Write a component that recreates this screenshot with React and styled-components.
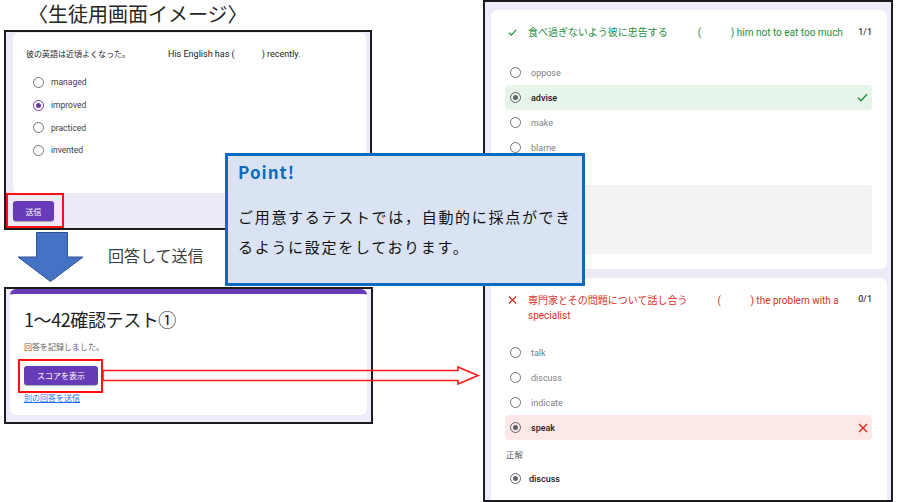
import React from 'react';
import styled, { createGlobalStyle } from 'styled-components';

const FORM_FONT = `Roboto, "Noto Sans CJK JP", sans-serif`;
const JP_FONT = `"Noto Sans CJK JP", "Noto Sans", sans-serif`;

const GlobalStyle = createGlobalStyle`
    html, body { margin: 0; padding: 0; background: #fff; }
    * { box-sizing: border-box; }
`;

let Slide = styled.div`
    position: relative;
    width: 900px;
    height: 502px;
    display: flex;
    align-items: flex-start;
    background: #fff;
    overflow: hidden;
`;

let LeftCol = styled.div`
    width: 369px;
    margin-left: 4px;
    display: flex;
    flex-direction: column;
`;

let Title = styled.div`
    height: 30px;
    padding-left: 24px;
    font-family: ${JP_FONT};
    font-size: 20px;
    line-height: 28px;
    color: #262626;
    white-space: nowrap;
`;

let Frame = styled.div`
    width: ${p => p.$w}px;
    height: ${p => p.$h}px;
    border: 2px solid #1c1c1c;
    background: #efeaf7;
    display: flex;
    flex-direction: column;
    overflow: hidden;
    font-family: ${FORM_FONT};
`;

let QuestionCard = styled.div`
    margin: 1px 4px 0 7px;
    height: 160px;
    background: #fff;
    border-radius: 5px;
    padding: 15px 0 0 13px;
`;

let Question = styled.div`
    font-size: 9px;
    line-height: 12px;
    color: #202124;
    white-space: nowrap;

    .jp
    {
        display: inline-block;
        width: 142px;
        font-size: 8px;
    }

    .blank
    {
        display: inline-block;
        width: 27px;
    }
`;

let OptionList = styled.div`
    margin-top: ${p => p.$top || 0}px;
    display: flex;
    flex-direction: column;
`;

let SmallOption = styled.div`
    height: 22.7px;
    display: flex;
    align-items: center;
    font-size: 8.5px;
    color: #3c4043;

    span { margin-left: 7px; }
`;

let Radio = styled.span`
    flex: none;
    width: 11px;
    height: 11px;
    border-radius: 50%;
    border: 1.4px solid ${p => p.$checked ? p.$color : '#6f7378'};
    display: flex;
    align-items: center;
    justify-content: center;

    &::after
    {
        content: "";
        width: 5px;
        height: 5px;
        border-radius: 50%;
        background: ${p => p.$color};
        display: ${p => p.$checked ? 'block' : 'none'};
    }
`;

let Highlight = styled.div`
    border: 2px solid #ff1010;
    padding: ${p => p.$pad};
    width: ${p => p.$w}px;
    height: ${p => p.$h}px;
    margin-left: ${p => p.$ml || 0}px;
    margin-top: ${p => p.$mt || 0}px;
`;

let PurpleButton = styled.div`
    width: ${p => p.$w}px;
    height: ${p => p.$h}px;
    background: #673ab7;
    color: #fff;
    border-radius: 3px;
    font-family: ${JP_FONT};
    font-size: 8px;
    display: flex;
    align-items: center;
    justify-content: center;
    box-shadow: 0 1px 1px rgba(0,0,0,0.3);
`;

let ArrowRow = styled.div`
    height: 57px;
    display: flex;
    align-items: flex-start;
    padding-left: 13px;
`;

let ArrowNote = styled.div`
    margin: 15px 0 0 24px;
    font-family: ${JP_FONT};
    font-size: 16px;
    line-height: 20px;
    color: #3f3f3f;
`;

let ResultCard = styled.div`
    margin: 0 4px 7px 4px;
    height: 126px;
    background: #fff;
    border-top: 5px solid #673ab7;
    border-radius: 6px;
    padding: 13px 0 0 14px;

    h1
    {
        margin: 0;
        font-family: ${JP_FONT};
        font-weight: 400;
        font-size: 18px;
        line-height: 24px;
        letter-spacing: -0.4px;
        color: #202124;
    }

    p
    {
        margin: 10px 0 0 0;
        font-family: ${JP_FONT};
        font-size: 8px;
        line-height: 12px;
        color: #5f6368;
    }

    a
    {
        display: block;
        font-family: ${JP_FONT};
        font-size: 8px;
        line-height: 10px;
        color: #1a73e8;
        text-decoration: underline;
    }
`;

let RightFrame = styled(Frame)`
    margin-left: 110px;
    padding: 8px 4px 0 6px;
`;

let QuizCard = styled.div`
    flex: none;
    background: #fff;
    border-radius: 6px;
    padding: ${p => p.$pt || 15}px 15px 15px 14px;
    margin-bottom: 9px;
`;

let QuizHeader = styled.div`
    display: flex;
    align-items: flex-start;
    font-size: 10px;
    line-height: ${p => p.$lh}px;
    color: ${p => p.$color};

    .icon
    {
        flex: none;
        width: 9px;
        margin: 0 11px 0 3px;
        display: flex;
        align-items: center;
        height: ${p => p.$lh}px;
    }

    .text
    {
        flex: 1;
        padding-right: 10px;
    }

    .jp { font-family: ${JP_FONT}; margin-right: 30px; }

    .paren
    {
        display: inline-block;
        width: 33px;
    }

    .score
    {
        flex: none;
        font-size: 9px;
        font-weight: 500;
        color: #3c4043;
    }
`;

let QuizOption = styled.div`
    height: 25px;
    display: flex;
    align-items: center;
    padding: 0 4px 0 5px;
    border-radius: 4px;
    background: ${p => p.$bg || 'transparent'};
    font-size: 9px;
    color: ${p => p.$strong ? '#202124' : '#7b7f84'};
    font-weight: ${p => p.$strong ? 500 : 400};

    .label { margin-left: ${p => p.$gap || 10}px; flex: 1; }
`;

let FeedbackBox = styled.div`
    margin-top: 25px;
    height: 69px;
    background: #f3f3f4;
    border-radius: 2px;
`;

let CorrectLabel = styled.div`
    margin: 8px 0 0 1px;
    font-family: ${JP_FONT};
    font-size: 8.5px;
    line-height: 12px;
    color: #5f6368;
`;

let PointBox = styled.div`
    position: absolute;
    left: 225px;
    top: 153px;
    width: 360px;
    height: 133px;
    border: 3px solid #0a6cc0;
    background: #dae3f3;
    padding: 5px 0 0 10px;
    font-family: ${JP_FONT};

    h2
    {
        margin: 0;
        font-size: 17px;
        line-height: 22px;
        font-weight: 700;
        letter-spacing: 1px;
        color: #0a6cc0;
    }

    p
    {
        margin: 19px 0 0 0;
        font-size: 15px;
        line-height: 30px;
        letter-spacing: 1.7px;
        color: #111;
        white-space: nowrap;
    }
`;

let Overlay = styled.svg`
    position: absolute;
    left: 0;
    top: 0;
    pointer-events: none;
`;

const Check = ({ color = '#1e8e3e' }) => (
    <svg width="11" height="9" viewBox="0 0 11 9">
        <polyline points="1,4.8 4,7.8 10,1.2" fill="none" stroke={color} strokeWidth="1.4" />
    </svg>
);

const Cross = ({ color = '#d93025' }) => (
    <svg width="10" height="10" viewBox="0 0 10 10">
        <path d="M1 1 L9 9 M9 1 L1 9" stroke={color} strokeWidth="1.5" />
    </svg>
);

function App()
{
    let leftOptions = ["managed", "improved", "practiced", "invented"];

    return (
        <Slide>
            <GlobalStyle />
            <LeftCol>
                <Title>〈生徒用画面イメージ〉</Title>
                <Frame $w={368} $h={200}>
                    <QuestionCard>
                        <Question>
                            <span className="jp">彼の英語は近頃よくなった。</span>
                            His English has (<span className="blank" />) recently.
                        </Question>
                        <OptionList $top={10}>
                            {leftOptions.map(o => (
                                <SmallOption key={o}>
                                    <Radio $checked={o === "improved"} $color="#673ab7" />
                                    <span>{o}</span>
                                </SmallOption>
                            ))}
                        </OptionList>
                    </QuestionCard>
                    <Highlight $w={58} $h={35} $pad="6px 0 0 5px">
                        <PurpleButton $w={41} $h={20}>送信</PurpleButton>
                    </Highlight>
                </Frame>
                <ArrowRow>
                    <svg width="67" height="52" viewBox="0 0 67 52" style={{ marginTop: 2 }}>
                        <polygon points="19.5,0.5 50.5,0.5 50.5,25 66,25 33.5,49.5 1,25 19.5,25"
                            fill="#4472c4" stroke="#2f528f" strokeWidth="1" />
                    </svg>
                    <ArrowNote>回答して送信</ArrowNote>
                </ArrowRow>
                <Frame $w={369} $h={137}>
                    <ResultCard>
                        <h1>1〜42確認テスト①</h1>
                        <p>回答を記録しました。</p>
                        <Highlight $w={85} $h={34} $pad="5px 3px 6px 4px" $ml={-6} $mt={6}>
                            <PurpleButton $w={74} $h={19}>スコアを表示</PurpleButton>
                        </Highlight>
                        <a>別の回答を送信</a>
                    </ResultCard>
                </Frame>
            </LeftCol>

            <RightFrame $w={410} $h={502}>
                <QuizCard>
                    <QuizHeader $lh={14} $color="#1e8e3e">
                        <span className="icon"><Check /></span>
                        <span className="text">
                            <span className="jp">食べ過ぎないよう彼に忠告する</span>
                            <span className="paren">(</span>) him not to eat too much
                        </span>
                        <span className="score">1/1</span>
                    </QuizHeader>
                    <OptionList $top={20}>
                        <QuizOption><Radio /><span className="label">oppose</span></QuizOption>
                        <QuizOption $bg="#e6f4ea" $strong>
                            <Radio $checked $color="#5f6368" />
                            <span className="label">advise</span>
                            <Check />
                        </QuizOption>
                        <QuizOption><Radio /><span className="label">make</span></QuizOption>
                        <QuizOption><Radio /><span className="label">blame</span></QuizOption>
                    </OptionList>
                    <FeedbackBox />
                </QuizCard>
                <QuizCard $pt={14}>
                    <QuizHeader $lh={15} $color="#d93025">
                        <span className="icon"><Cross /></span>
                        <span className="text">
                            <span className="jp">専門家とその問題について話し合う</span>
                            <span className="paren">(</span>) the problem with a specialist
                        </span>
                        <span className="score">0/1</span>
                    </QuizHeader>
                    <OptionList $top={17}>
                        <QuizOption><Radio /><span className="label">talk</span></QuizOption>
                        <QuizOption><Radio /><span className="label">discuss</span></QuizOption>
                        <QuizOption><Radio /><span className="label">indicate</span></QuizOption>
                        <QuizOption $bg="#fce8e6" $strong>
                            <Radio $checked $color="#5f6368" />
                            <span className="label">speak</span>
                            <Cross />
                        </QuizOption>
                    </OptionList>
                    <CorrectLabel>正解</CorrectLabel>
                    <OptionList $top={6}>
                        <QuizOption $gap={8} $strong>
                            <Radio $checked $color="#5f6368" />
                            <span className="label">discuss</span>
                        </QuizOption>
                    </OptionList>
                </QuizCard>
            </RightFrame>

            <PointBox>
                <h2>Point!</h2>
                <p>ご用意するテストでは，自動的に採点ができ<br />るように設定をしております。</p>
            </PointBox>

            <Overlay width="900" height="502">
                <polygon points="103,370.5 458,370.5 458,367 478,375.5 458,384 458,380.5 103,380.5"
                    fill="none" stroke="#ff1a1a" strokeWidth="1.6" />
            </Overlay>
        </Slide>
    );
}

export default App;
